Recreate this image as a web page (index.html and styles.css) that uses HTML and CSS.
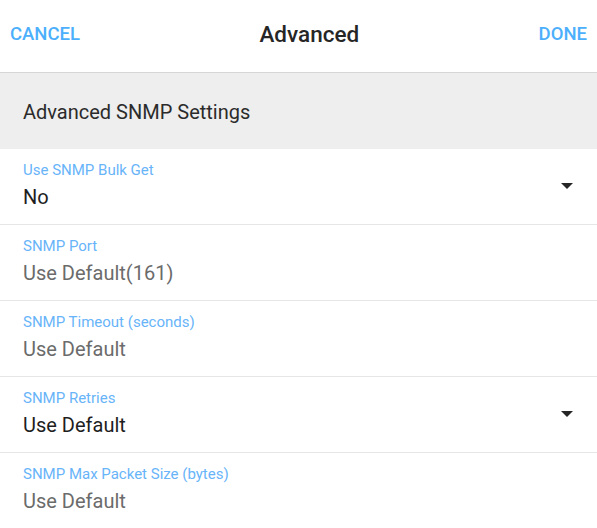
FILE: index.html
```html
<!DOCTYPE html>
<html>
<head>
<meta charset="utf-8">
<link rel="stylesheet" href="styles.css">
</head>
<body>
<header class="topbar">
  <span class="action">CANCEL</span>
  <span class="title">Advanced</span>
  <span class="action">DONE</span>
</header>
<div class="section">Advanced SNMP Settings</div>
<div class="row">
  <div class="field">
    <div class="label">Use SNMP Bulk Get</div>
    <div class="value">No</div>
  </div>
  <span class="caret"></span>
</div>
<div class="row">
  <div class="field">
    <div class="label">SNMP Port</div>
    <div class="value muted">Use Default(161)</div>
  </div>
</div>
<div class="row">
  <div class="field">
    <div class="label">SNMP Timeout (seconds)</div>
    <div class="value muted">Use Default</div>
  </div>
</div>
<div class="row">
  <div class="field">
    <div class="label">SNMP Retries</div>
    <div class="value">Use Default</div>
  </div>
  <span class="caret"></span>
</div>
<div class="row">
  <div class="field">
    <div class="label">SNMP Max Packet Size (bytes)</div>
    <div class="value muted">Use Default</div>
  </div>
</div>
</body>
</html>
```
FILE: styles.css
```css
html, body {
  margin: 0;
  padding: 0;
  background: #fff;
  font-family: Roboto, "Liberation Sans", sans-serif;
  overflow: hidden;
}
.topbar {
  height: 73px;
  box-sizing: border-box;
  display: flex;
  align-items: center;
  justify-content: space-between;
  padding: 0 10px 4px 10px;
  border-bottom: 1px solid #d6d6d6;
}
.action {
  color: #4caffc;
  font-size: 18.5px;
  font-weight: 500;
}
.title {
  color: #262626;
  font-size: 22.5px;
  font-weight: 500;
}
.section {
  height: 76px;
  box-sizing: border-box;
  background: #eeeeee;
  display: flex;
  align-items: center;
  padding: 1px 0 0 23px;
  font-size: 20px;
  color: #2b2b2b;
}
.row {
  height: 76px;
  box-sizing: border-box;
  border-bottom: 1px solid #e6e6e6;
  display: flex;
  align-items: flex-start;
  padding: 12px 24px 0 23px;
}
.field {
  flex: 1;
}
.label {
  color: #68b4f9;
  font-size: 15px;
  line-height: 18px;
}
.value {
  color: #1e1e1e;
  font-size: 20px;
  line-height: 24px;
  margin-top: 6px;
}
.value.muted {
  color: #6b6b6b;
}
.caret {
  width: 0;
  height: 0;
  border-left: 6.5px solid transparent;
  border-right: 6.5px solid transparent;
  border-top: 6.5px solid #262626;
  margin-top: 22px;
}
```
